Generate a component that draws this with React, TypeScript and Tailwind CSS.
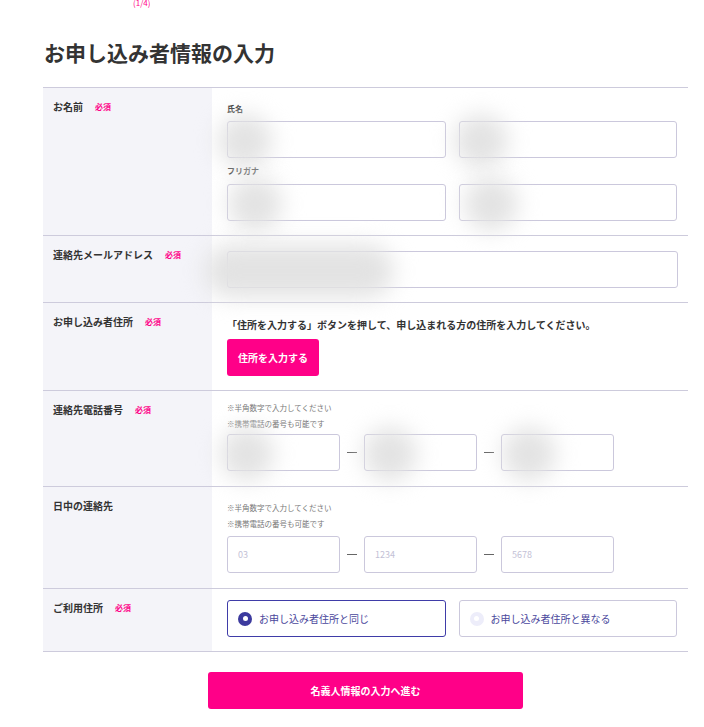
import React from "react";

// Applicant info entry form (step 1/4).

const PINK = "bg-[#ff0088]";

function Required() {
  return <span className="ml-[12px] text-[8px] font-bold text-[#ff0088]">必須</span>;
}

function Blob({ className }: { className: string }) {
  // privacy blur over filled-in values
  return <div className={`pointer-events-none absolute rounded-full bg-[#e3e3e3] blur-[11px] ${className}`} />;
}

function Field({ placeholder, blob, className = "" }: { placeholder?: string; blob?: string; className?: string }) {
  return (
    <div className={`relative h-[37px] rounded-[3px] border border-[#cbc8dc] bg-white ${className}`}>
      {placeholder && (
        <span className="absolute left-[10px] top-1/2 -translate-y-1/2 text-[9px] text-[#c3c1d6]">{placeholder}</span>
      )}
      {blob && <Blob className={blob} />}
    </div>
  );
}

function Row({ label, required, children, bodyClass }: { label: string; required?: boolean; children: React.ReactNode; bodyClass: string }) {
  return (
    <div className="flex border-b border-[#cdcbdc]">
      <div className="w-[169px] shrink-0 bg-[#f4f4f9] pl-[10px] pt-[12px]">
        <div className="flex items-center text-[10px] font-bold leading-[14px] text-[#333]">
          {label}
          {required && <Required />}
        </div>
      </div>
      <div className={`flex-1 pl-[15px] pr-[11px] ${bodyClass}`}>{children}</div>
    </div>
  );
}

function Dash() {
  return <div className="mx-[7px] h-[1.5px] w-[10px] bg-[#666]" />;
}

function PhoneInputs({ placeholders, blobs }: { placeholders?: string[]; blobs?: boolean }) {
  return (
    <div className="flex items-center">
      <Field className="w-[113px]" placeholder={placeholders?.[0]} blob={blobs ? "left-[-8px] top-[-8px] h-[54px] w-[54px]" : undefined} />
      <Dash />
      <Field className="w-[113px]" placeholder={placeholders?.[1]} blob={blobs ? "left-[-2px] top-[-8px] h-[54px] w-[54px]" : undefined} />
      <Dash />
      <Field className="w-[113px]" placeholder={placeholders?.[2]} blob={blobs ? "left-[0px] top-[-8px] h-[54px] w-[54px]" : undefined} />
    </div>
  );
}

function Notes() {
  return (
    <div className="text-[7.5px] leading-[16px] text-[#777]">
      <div>※半角数字で入力してください</div>
      <div>※携帯電話の番号も可能です</div>
    </div>
  );
}

function Radio({ label, checked }: { label: string; checked?: boolean }) {
  return (
    <div
      className={`flex h-[37px] flex-1 items-center rounded-[3px] border bg-white pl-[10px] ${
        checked ? "border-[#3f3ca8]" : "border-[#cbc8dc]"
      }`}
    >
      <span
        className={`flex h-[14px] w-[14px] items-center justify-center rounded-full ${
          checked ? "bg-[#3c3a9e]" : "bg-[#ededfa]"
        }`}
      >
        <span className="h-[5px] w-[5px] rounded-full bg-white" />
      </span>
      <span className="ml-[7px] text-[10px] text-[#4a479c]">{label}</span>
    </div>
  );
}

export default function App() {
  return (
    <div className="w-[704px] min-h-[727px] bg-white pl-[43px] pr-[16px] font-['Noto_Sans_CJK_JP','Noto_Sans',sans-serif] text-[#333]">
      <div className="-mt-[2px] pl-[90px] text-[8px] leading-[10px] text-[#ff0088]">(1/4)</div>
      <h1 className="mt-[28px] pl-[1px] text-[21px] font-bold leading-[32px] text-[#333]">お申し込み者情報の入力</h1>

      <div className="mt-[19px] border-t border-[#cdcbdc]">
        <Row label="お名前" required bodyClass="pt-[15px] pb-[14px]">
          <div className="text-[8px] font-bold leading-[12px]">氏名</div>
          <div className="mt-[6px] flex gap-[13px]">
            <Field className="flex-1" blob="left-[-10px] top-[-8px] h-[54px] w-[54px]" />
            <Field className="flex-1" blob="left-[-6px] top-[-8px] h-[54px] w-[54px]" />
          </div>
          <div className="mt-[7px] text-[8px] font-bold leading-[12px]">フリガナ</div>
          <div className="mt-[7px] flex gap-[13px]">
            <Field className="flex-1" blob="left-[0px] top-[-8px] h-[54px] w-[54px]" />
            <Field className="flex-1" blob="left-[4px] top-[-8px] h-[54px] w-[54px]" />
          </div>
        </Row>

        <Row label="連絡先メールアドレス" required bodyClass="pt-[15px] pb-[14px]">
          <Field className="mr-[-1px]" blob="left-[-24px] top-[-8px] h-[54px] w-[190px]" />
        </Row>

        <Row label="お申し込み者住所" required bodyClass="pt-[15px] pb-[14px]">
          <div className="text-[10px] font-bold leading-[14px]">
            「住所を入力する」ボタンを押して、申し込まれる方の住所を入力してください。
          </div>
          <button
            type="button"
            className={`mt-[7px] h-[37px] w-[92px] rounded-[3px] ${PINK} text-[10px] font-bold text-white`}
          >
            住所を入力する
          </button>
        </Row>

        <Row label="連絡先電話番号" required bodyClass="pt-[9px] pb-[15px]">
          <Notes />
          <div className="mt-[2px]">
            <PhoneInputs blobs />
          </div>
        </Row>

        <Row label="日中の連絡先" bodyClass="pt-[13px] pb-[15px]">
          <Notes />
          <div className="mt-[4px]">
            <PhoneInputs placeholders={["03", "1234", "5678"]} />
          </div>
        </Row>

        <Row label="ご利用住所" required bodyClass="pt-[11px] pb-[14px]">
          <div className="flex gap-[13px]">
            <Radio label="お申し込み者住所と同じ" checked />
            <Radio label="お申し込み者住所と異なる" />
          </div>
        </Row>
      </div>

      <div className="mt-[20px] flex justify-center">
        <button
          type="button"
          className={`h-[37px] w-[315px] rounded-[3px] ${PINK} text-[10px] font-bold text-white`}
        >
          名義人情報の入力へ進む
        </button>
      </div>
    </div>
  );
}
